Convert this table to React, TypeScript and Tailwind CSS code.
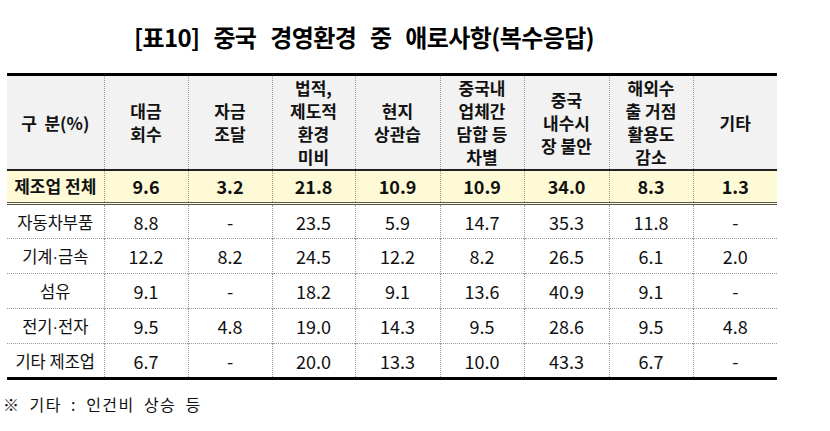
import React from "react";

const headers: string[][] = [
  ["대금", "회수"],
  ["자금", "조달"],
  ["법적,", "제도적", "환경", "미비"],
  ["현지", "상관습"],
  ["중국내", "업체간", "담합 등", "차별"],
  ["중국", "내수시", "장 불안"],
  ["해외수", "출 거점", "활용도", "감소"],
  ["기타"],
];

const total = ["9.6", "3.2", "21.8", "10.9", "10.9", "34.0", "8.3", "1.3"];

const rows: { label: React.ReactNode; values: string[] }[] = [
  { label: "자동차부품", values: ["8.8", "-", "23.5", "5.9", "14.7", "35.3", "11.8", "-"] },
  {
    label: (
      <>
        기계<span style={{ fontFamily: '"Liberation Sans", sans-serif' }}>·</span>금속
      </>
    ),
    values: ["12.2", "8.2", "24.5", "12.2", "8.2", "26.5", "6.1", "2.0"],
  },
  { label: "섬유", values: ["9.1", "-", "18.2", "9.1", "13.6", "40.9", "9.1", "-"] },
  {
    label: (
      <>
        전기<span style={{ fontFamily: '"Liberation Sans", sans-serif' }}>·</span>전자
      </>
    ),
    values: ["9.5", "4.8", "19.0", "14.3", "9.5", "28.6", "9.5", "4.8"],
  },
  { label: "기타 제조업", values: ["6.7", "-", "20.0", "13.3", "10.0", "43.3", "6.7", "-"] },
];

const font = { fontFamily: '"Noto Sans CJK KR", "Noto Sans", sans-serif' };

export default function App() {
  return (
    <div className="w-[830px] h-[431px] bg-white text-[#111] overflow-hidden" style={font}>
      <div className="pt-[22px] pl-[134px] h-[73px]">
        <h1 className="text-[24px] leading-[30px] font-bold tracking-[-0.6px] [word-spacing:9px] text-black">
          [표10] 중국 경영환경 중 애로사항(복수응답)
        </h1>
      </div>
      <table className="ml-[7px] w-[770px] border-collapse table-fixed border-t-[3px] border-b-[3px] border-black">
        <colgroup>
          <col className="w-[97px]" />
          <col className="w-[84px]" />
          <col className="w-[84px]" />
          <col className="w-[83px]" />
          <col className="w-[85px]" />
          <col className="w-[84px]" />
          <col className="w-[85px]" />
          <col className="w-[84px]" />
          <col className="w-[84px]" />
        </colgroup>
        <thead>
          <tr className="bg-[#f2f2f2] h-[95px] border-b-2 border-[#222]">
            <th className="text-[17px] leading-[23px] font-bold text-center align-middle border-r border-dotted border-[#999]">
              구&nbsp;&nbsp;분(%)
            </th>
            {headers.map((h, i) => (
              <th
                key={i}
                className={`text-[17px] leading-[23px] font-bold text-center align-middle ${i < 7 ? "border-r border-dotted border-[#999]" : ""}`}
              >
                {h.map((l, j) => (
                  <div key={j}>{l}</div>
                ))}
              </th>
            ))}
          </tr>
        </thead>
        <tbody>
          <tr className="bg-[#fdfad5] h-[34px] border-b-[3px] border-double border-[#555]">
            <td className="text-[17px] leading-[24px] font-bold text-center border-r border-dotted border-[#999]">제조업 전체</td>
            {total.map((v, i) => (
              <td
                key={i}
                className={`text-[18px] leading-[24px] font-bold text-center ${i < 7 ? "border-r border-dotted border-[#999]" : ""}`}
              >
                {v}
              </td>
            ))}
          </tr>
          {rows.map((r, ri) => (
            <tr
              key={ri}
              className={`h-[35px] ${ri < rows.length - 1 ? "border-b border-dotted border-[#999]" : ""}`}
            >
              <td className="text-[16.5px] leading-[24px] text-center border-r border-dotted border-[#999]">{r.label}</td>
              {r.values.map((v, i) => (
                <td
                  key={i}
                  className={`text-[18px] leading-[24px] text-center ${i < 7 ? "border-r border-dotted border-[#999]" : ""}`}
                >
                  {v}
                </td>
              ))}
            </tr>
          ))}
        </tbody>
      </table>
      <p className="mt-[12px] pl-[3px] text-[16px] leading-[24px] tracking-[1.5px] [word-spacing:4px]">
        ※ 기타 : 인건비 상승 등
      </p>
    </div>
  );
}
